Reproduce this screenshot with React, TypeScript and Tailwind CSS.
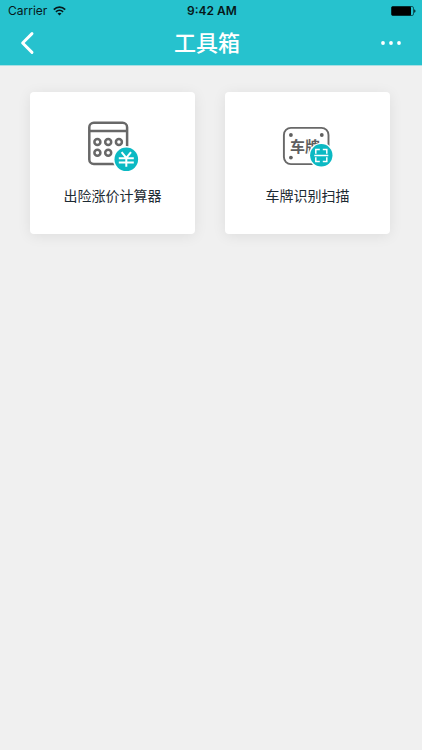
import type { ReactNode } from 'react'

interface ToolCardProps {
  label: string
  icon: ReactNode
}

function WifiIcon() {
  return (
    <svg width="13" height="10" viewBox="0 0 13 10" fill="none" stroke="#06181a" aria-hidden="true">
      <path d="M0.8 3.6C4 0.4 9 0.4 12.2 3.6" strokeWidth="1.7" />
      <path d="M2.9 5.9C5 3.9 8 3.9 10.1 5.9" strokeWidth="1.6" />
      <path d="M6.5 9.4L4.5 7.4C5.6 6.4 7.4 6.4 8.5 7.4Z" fill="#06181a" stroke="none" />
    </svg>
  )
}

function BatteryIcon() {
  return (
    <svg width="25" height="10" viewBox="0 0 25 10" aria-hidden="true">
      <rect x="0.5" y="0.5" width="22" height="9" rx="1.5" fill="none" stroke="#0b5a60" />
      <rect x="0.5" y="0.5" width="19.5" height="9" rx="1" fill="#000" />
      <path d="M23.3 3.2C24.8 3.7 24.8 6.3 23.3 6.8Z" fill="#000" />
    </svg>
  )
}

function CalculatorIcon() {
  return (
    <svg width="66" height="66" viewBox="0 0 66 66" fill="none" aria-hidden="true">
      <g stroke="#686868" strokeWidth="2.5">
        <rect x="9.3" y="10.7" width="37.8" height="41.3" rx="4.5" />
        <path d="M9.3 19H47" />
        <circle cx="17.4" cy="29.9" r="3" />
        <circle cx="28.2" cy="29.9" r="3" />
        <circle cx="38.9" cy="29.9" r="3" />
        <circle cx="17.4" cy="40.8" r="3" />
        <circle cx="28.2" cy="40.8" r="3" />
      </g>
      <circle cx="46.3" cy="47.3" r="13.4" fill="#fff" />
      <circle cx="46.3" cy="47.3" r="11.8" fill="#0bb9c3" />
      <path
        d="M41.6 40.2L46.3 46L51 40.2M46.3 46V54.8M38.8 46.2H53.8M38.8 50.6H53.8"
        stroke="#fff"
        strokeWidth="2"
      />
    </svg>
  )
}

function PlateIcon() {
  return (
    <svg width="66" height="66" viewBox="1 0 66 66" fill="none" aria-hidden="true">
      <rect x="9.9" y="15.9" width="44.6" height="36.2" rx="7" stroke="#686868" strokeWidth="1.9" />
      <circle cx="16.9" cy="23" r="1.9" fill="#606060" />
      <circle cx="47.8" cy="23" r="1.9" fill="#606060" />
      <circle cx="16.9" cy="45.6" r="1.9" fill="#606060" />
      <text
        x="16"
        y="39.5"
        fill="#5e5e5e"
        className="text-[15px] font-bold font-['Noto_Sans_CJK_SC',sans-serif]"
      >
        车牌
      </text>
      <circle cx="47.3" cy="43.3" r="12.6" fill="#fff" />
      <circle cx="47.3" cy="43.3" r="11.2" fill="#0bb9c3" />
      <path
        d="M41.8 41.8V37.4H45.8M48.8 37.4H52.8V41.8M41.8 45.2V49.6H45.8M48.8 49.6H52.8V45.2M40.3 43.5H54.3"
        stroke="#fff"
        strokeWidth="1.5"
      />
    </svg>
  )
}

function ToolCard({ label, icon }: ToolCardProps) {
  return (
    <button
      type="button"
      className="flex flex-col items-center rounded-sm bg-white pt-5 pb-7 shadow-[0_2px_14px_rgba(0,0,0,0.08)]"
    >
      {icon}
      <span className="mt-2 text-sm leading-5 text-[#1c2a33]">{label}</span>
    </button>
  )
}

export default function App() {
  return (
    <div className="min-h-screen bg-[#f0f0f0] font-['Inter','Noto_Sans_CJK_SC',sans-serif]">
      <header className="border-b border-[#a9dfe3] bg-[#26c2ce]">
        {/* Status bar */}
        <div className="grid grid-cols-3 items-center pt-0.5 pr-1.5 pl-2 text-xs leading-[18px] text-[#06181a]">
          <div className="flex items-center gap-1.5">
            <span>Carrier</span>
            <WifiIcon />
          </div>
          <span className="text-center font-semibold">9:42 AM</span>
          <div className="flex justify-end">
            <BatteryIcon />
          </div>
        </div>

        {/* Nav bar */}
        <div className="flex h-[45px] items-center justify-between px-5 text-white">
          <button type="button" aria-label="返回" className="flex w-5">
            <svg width="15" height="24" viewBox="0 0 15 24" fill="none" aria-hidden="true">
              <path
                d="M12 2.6L2.6 12L12 21.4"
                stroke="#fff"
                strokeWidth="2.9"
                strokeLinecap="round"
                strokeLinejoin="round"
              />
            </svg>
          </button>
          <h1 className="text-[22px] leading-8 font-medium">工具箱</h1>
          <button type="button" aria-label="更多" className="flex w-7 justify-end">
            <svg width="22" height="6" viewBox="0 0 22 6" fill="#fff" aria-hidden="true">
              <circle cx="3" cy="3" r="1.9" />
              <circle cx="11" cy="3" r="1.9" />
              <circle cx="19" cy="3" r="1.9" />
            </svg>
          </button>
        </div>
      </header>

      <main className="grid grid-cols-2 gap-[30px] pt-[26px] pr-8 pl-[30px]">
        <ToolCard label="出险涨价计算器" icon={<CalculatorIcon />} />
        <ToolCard label="车牌识别扫描" icon={<PlateIcon />} />
      </main>
    </div>
  )
}
